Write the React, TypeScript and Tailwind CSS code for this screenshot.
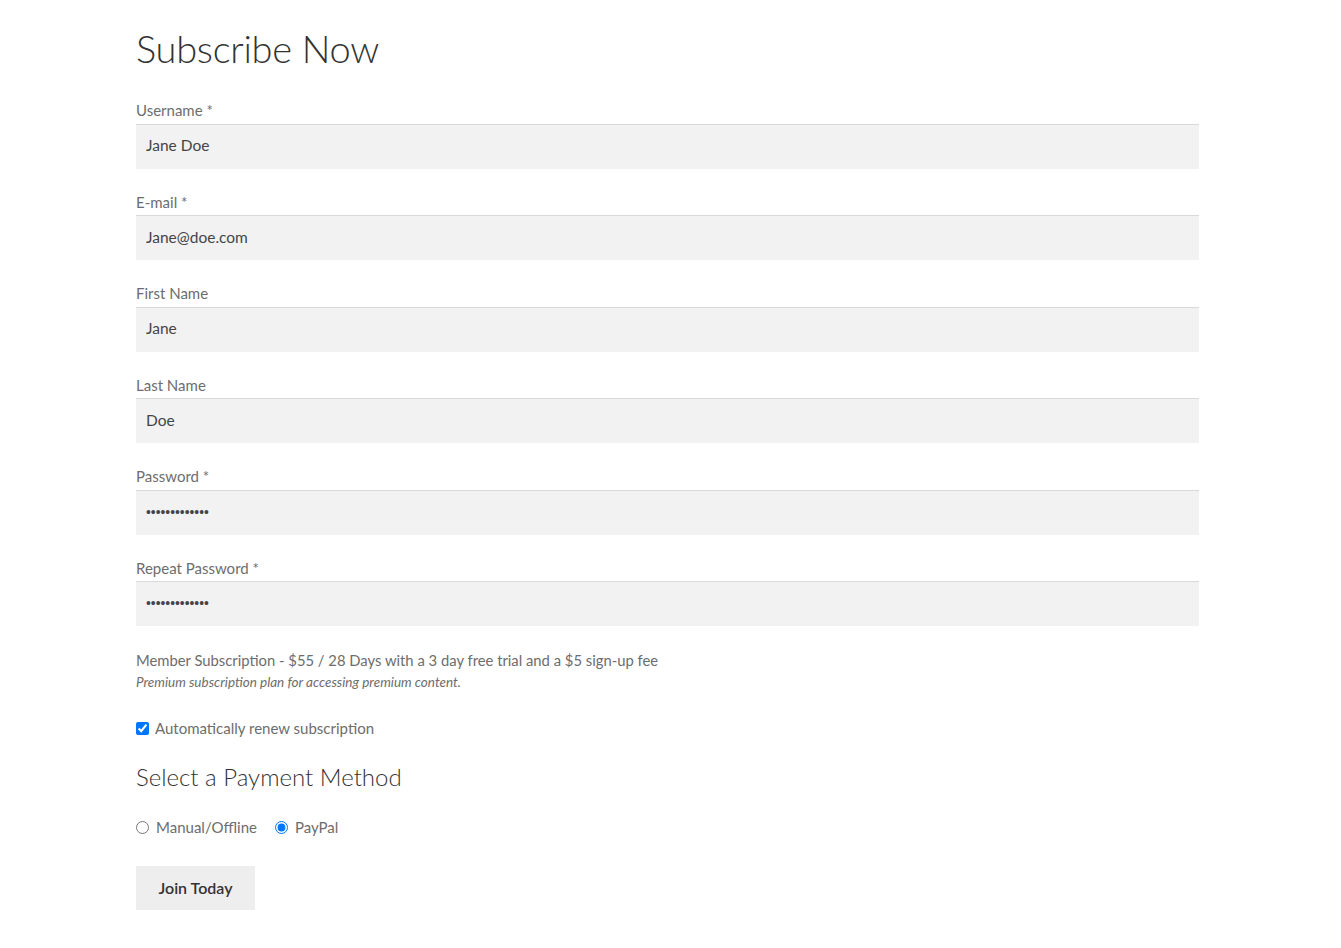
import React from "react";

const font = { fontFamily: '"Source Sans Pro", Lato, "Noto Sans", sans-serif' };
const pwFont = { fontFamily: '"Liberation Sans", Arial, sans-serif' };

function Field({ label, value, required, type = "text" }: { label: string; value: string; required?: boolean; type?: string }) {
  const isPw = type === "password";
  return (
    <div className="flex flex-col mb-[22px]">
      <label className="text-[15px] leading-[22.5px] text-[#6d6d6d] mb-[2px]">
        {label}
        {required ? " *" : ""}
      </label>
      <input
        type={type}
        defaultValue={value}
        readOnly
        className={
          isPw
            ? "h-[45px] w-full bg-[#f2f2f2] border-t border-[#d9d9d9] pl-[10px] pb-[1px] text-[13.8px] text-[#43454b] outline-none"
            : "h-[45px] w-full bg-[#f2f2f2] border-t border-[#d9d9d9] pl-[10px] pb-[3px] text-[15.5px] text-[#43454b] outline-none"
        }
        style={isPw ? pwFont : font}
      />
    </div>
  );
}

export default function App() {
  return (
    <div className="min-h-screen bg-white" style={font}>
      <div className="w-[1063px] ml-[136px] pt-[24px] pb-[37px]">
        <h1 className="text-[38px] leading-[48px] font-light text-[#333333] mb-[27px] tracking-[-0.3px]">Subscribe Now</h1>
        <Field label="Username" value="Jane Doe" required />
        <Field label="E-mail" value="Jane@doe.com" required />
        <Field label="First Name" value="Jane" />
        <Field label="Last Name" value="Doe" />
        <Field label="Password" value="Jane1234doe!!" required type="password" />
        <Field label="Repeat Password" value="Jane1234doe!!" required type="password" />
        <div>
          <div className="text-[14.8px] leading-[24px] text-[#6d6d6d]">
            Member Subscription - $55 / 28 Days with a 3 day free trial and a $5 sign-up fee
          </div>
          <div className="text-[13.5px] leading-[20px] italic text-[#6d6d6d]">
            Premium subscription plan for accessing premium content.
          </div>
        </div>
        <label className="mt-[24px] flex items-center gap-[6px] text-[15px] leading-[24px] text-[#6d6d6d]">
          <input type="checkbox" defaultChecked className="w-[13px] h-[13px] m-0 accent-[#0075ff]" />
          Automatically renew subscription
        </label>
        <h2 className="mt-[20px] text-[24px] leading-[34px] font-light text-[#333333]">Select a Payment Method</h2>
        <div className="mt-[21px] flex items-center text-[15px] leading-[24px] text-[#6d6d6d]">
          <label className="flex items-center gap-[7px] mr-[18px]">
            <input type="radio" name="pm" className="w-[13px] h-[13px] m-0" />
            Manual/Offline
          </label>
          <label className="flex items-center gap-[7px]">
            <input type="radio" name="pm" defaultChecked className="w-[13px] h-[13px] m-0 accent-[#0075ff]" />
            PayPal
          </label>
        </div>
        <button className="mt-[27px] w-[119px] h-[44px] bg-[#eeeeee] text-[#333333] font-semibold text-[16px]" style={font}>
          Join Today
        </button>
      </div>
    </div>
  );
}
